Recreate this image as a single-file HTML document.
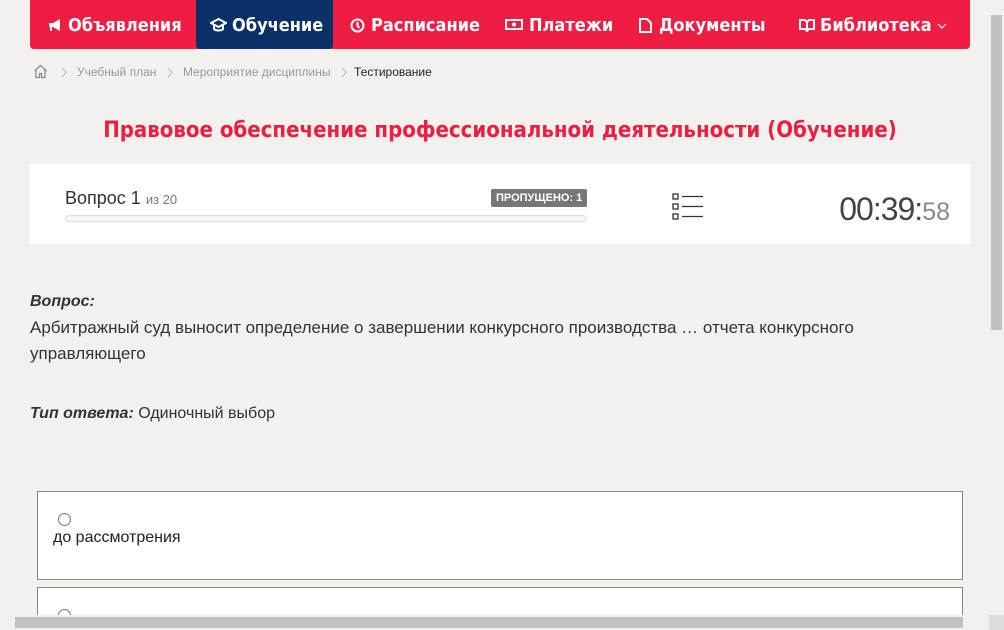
<!DOCTYPE html>
<html style="overflow:hidden;height:630px"><head><meta charset="utf-8"><style>
*{margin:0;padding:0;box-sizing:border-box}
body{width:1004px;height:630px;overflow:hidden;background:#f2f1ee;font-family:"Liberation Sans",sans-serif;position:relative;color:#222}
.nav{position:absolute;left:30px;top:0;width:940px;height:49px;background:#ee1d41;border-radius:0 0 4px 4px}
.it{position:absolute;top:1px;height:49px;line-height:50px;color:#fff;font-size:18px;font-weight:bold;white-space:nowrap;font-family:"DejaVu Sans Condensed","Liberation Sans",sans-serif}
.ic{position:absolute;top:18px}
.act{background:#0b3068;border-radius:0 0 4px 4px}
.bc{position:absolute;top:65px;font-size:12px;color:#999}
h1{position:absolute;top:118px;left:0;width:1000px;text-align:center;font-size:22px;color:#ee1d41;font-weight:bold;font-family:"DejaVu Sans Condensed","Liberation Sans",sans-serif}
.card{position:absolute;left:30px;top:164px;width:940px;height:80px;background:#fff}
.opt{position:absolute;left:37px;width:926px;background:#fff;border:1px solid #888}
.radio{position:absolute;left:20px;width:13px;height:13px;border:1px solid #777;border-radius:50%;background:#fff}
</style></head><body>
<div class="nav">
 <div class="act" style="position:absolute;left:166px;top:0;width:137px;height:49px"></div>
 <svg class="ic" style="left:18px" width="15" height="15" viewBox="0 0 15 15"><path d="M1 5h4l7-4v12l-7-4H4v4H2V9H1z" fill="#fff"/></svg><div class="it" style="left:38px">Объявления</div>
 <svg class="ic" style="left:180px" width="17" height="14" viewBox="0 0 17 14"><path d="M8.5 1L1 5l7.5 4L16 5z M4 7v4c2 2 7 2 9 0V7" fill="none" stroke="#fff" stroke-width="2"/></svg><div class="it" style="left:202px">Обучение</div>
 <svg class="ic" style="left:320px" width="15" height="15" viewBox="0 0 15 15"><circle cx="7.5" cy="7.5" r="6" fill="none" stroke="#fff" stroke-width="2"/><path d="M7.5 4v4l2 2" stroke="#fff" stroke-width="2" fill="none"/></svg><div class="it" style="left:341px">Расписание</div>
 <svg class="ic" style="left:475px" width="18" height="13" viewBox="0 0 18 13"><rect x="1" y="2" width="16" height="9" fill="none" stroke="#fff" stroke-width="2"/><circle cx="9" cy="6.5" r="2" fill="#fff"/></svg><div class="it" style="left:499px">Платежи</div>
 <svg class="ic" style="left:609px" width="13" height="15" viewBox="0 0 13 15"><path d="M1 1h7l4 4v9H1z" fill="none" stroke="#fff" stroke-width="2"/></svg><div class="it" style="left:629px">Документы</div>
 <svg class="ic" style="left:769px" width="16" height="14" viewBox="0 0 16 14"><path d="M1 2h5l2 2 2-2h5v9h-5l-2 2-2-2H1z M8 4v9" fill="none" stroke="#fff" stroke-width="2"/></svg><div class="it" style="left:790px">Библиотека</div>
 <svg class="ic" style="left:907px;top:23px" width="10" height="7" viewBox="0 0 10 7"><path d="M1 1l4 4 4-4" fill="none" stroke="#fff" stroke-width="1.2"/></svg>
</div>
<svg style="position:absolute;left:33px;top:64px" width="15" height="15" viewBox="0 0 15 15"><path d="M1.5 7L7.5 1.5 13.5 7M3 6v7.5h3.5v-4h2v4H12V6" fill="none" stroke="#888" stroke-width="1.2"/></svg>
<svg style="position:absolute;left:61px;top:67px" width="6" height="11" viewBox="0 0 6 11"><path d="M1 1l4 4.5L1 10" fill="none" stroke="#bbb"/></svg><span class="bc" style="left:77px">Учебный план</span>
<svg style="position:absolute;left:167px;top:67px" width="6" height="11" viewBox="0 0 6 11"><path d="M1 1l4 4.5L1 10" fill="none" stroke="#bbb"/></svg><span class="bc" style="left:183px">Мероприятие дисциплины</span>
<svg style="position:absolute;left:341px;top:67px" width="6" height="11" viewBox="0 0 6 11"><path d="M1 1l4 4.5L1 10" fill="none" stroke="#bbb"/></svg><span class="bc" style="left:354px;color:#222">Тестирование</span>
<h1>Правовое обеспечение профессиональной деятельности (Обучение)</h1>
<div class="card">
 <div style="position:absolute;left:35px;top:24px;font-size:18px;color:#333">Вопрос 1 <span style="font-size:13px;color:#777">из 20</span></div>
 <div style="position:absolute;left:461px;top:25px;background:#777;color:#fff;font-size:11px;font-weight:bold;padding:3px 5px;border-radius:2px">ПРОПУЩЕНО: 1</div>
 <div style="position:absolute;left:35px;top:51px;width:522px;height:7px;border:1px solid #ddd;border-radius:4px;background:#f6f6f6"></div>
 <svg style="position:absolute;left:642px;top:29px" width="32" height="27" viewBox="0 0 32 27"><g fill="none" stroke="#333" stroke-width="1.3"><rect x="1" y="1" width="5" height="5"/><rect x="1" y="11" width="5" height="5"/><rect x="1" y="21" width="5" height="5"/><path d="M10 3.5h21M10 13.5h21M10 23.5h21"/></g></svg>
 <div style="position:absolute;right:20px;top:27px;font-size:32px;color:#444;letter-spacing:-1px">00:39:<span style="font-size:25px;color:#888;letter-spacing:0">58</span></div>
</div>
<div style="position:absolute;left:30px;top:293px;font-size:16px;font-weight:bold;font-style:italic;color:#333">Вопрос:</div>
<div style="position:absolute;left:30px;top:315px;width:900px;font-size:17px;line-height:26px;color:#333">Арбитражный суд выносит определение о завершении конкурсного производства … отчета конкурсного управляющего</div>
<div style="position:absolute;left:30px;top:405px;font-size:16px;color:#333"><b><i>Тип ответа:</i></b> Одиночный выбор</div>
<div class="opt" style="top:491px;height:89px"><div class="radio" style="top:21px"></div><div style="position:absolute;left:15px;top:37px;font-size:16px">до рассмотрения</div></div>
<div class="opt" style="top:587px;height:28px;border-bottom:none"><div class="radio" style="top:21px"></div></div>
<div style="position:absolute;left:989px;top:0;width:15px;height:615px;background:#f0f0f0"><div style="position:absolute;left:2px;top:15px;width:11px;height:315px;background:#c1c1c1"></div></div>
<div style="position:absolute;left:0;top:615px;width:989px;height:15px;background:#f0f0f0"><div style="position:absolute;left:15px;top:2px;width:948px;height:11px;background:#c1c1c1"></div></div>
<div style="position:absolute;left:989px;top:615px;width:15px;height:15px;background:#dcdcdc"></div>
</body></html>
